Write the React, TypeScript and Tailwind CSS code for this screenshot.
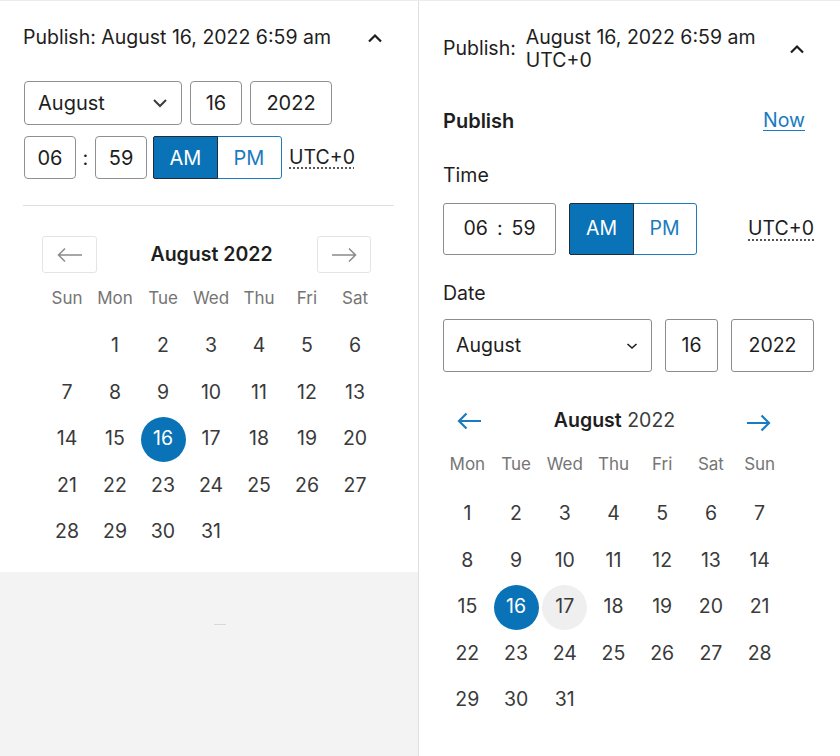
import React from 'react';

const BLUE = 'bg-[#0a73b7]';

function ChevronUp() {
  return (
    <svg width="18" height="12" viewBox="0 0 18 12" fill="none">
      <path d="M3 9.5 9 3.5l6 6" stroke="#1e1e1e" strokeWidth="2.2" />
    </svg>
  );
}

function ChevronDown({ small }: { small?: boolean }) {
  return small ? (
    <svg width="14" height="10" viewBox="0 0 14 10" fill="none">
      <path d="M2.5 3 7 7l4.5-4" stroke="#1e1e1e" strokeWidth="1.6" />
    </svg>
  ) : (
    <svg width="16" height="12" viewBox="0 0 16 12" fill="none">
      <path d="M2 3l6 6 6-6" stroke="#3c3c3c" strokeWidth="2" />
    </svg>
  );
}

function ThinArrow({ dir }: { dir: 'left' | 'right' }) {
  return (
    <svg width="28" height="16" viewBox="0 0 28 16" fill="none">
      {dir === 'left' ? (
        <path d="M26 8H2.5M9 1.5 2.5 8 9 14.5" stroke="#8a8a8a" strokeWidth="1.5" />
      ) : (
        <path d="M2 8h23.5M19 1.5 25.5 8 19 14.5" stroke="#8a8a8a" strokeWidth="1.5" />
      )}
    </svg>
  );
}

function BlueArrow({ dir }: { dir: 'left' | 'right' }) {
  return (
    <svg width="28" height="22" viewBox="0 0 28 22" fill="none">
      {dir === 'left' ? (
        <path d="M26 11H4M11.5 3.5 4 11l7.5 7.5" stroke="#1a7bc0" strokeWidth="2.2" />
      ) : (
        <path d="M2 11h22M16.5 3.5 24 11l-7.5 7.5" stroke="#1a7bc0" strokeWidth="2.2" />
      )}
    </svg>
  );
}

const leftDays: (number | null)[] = [null, ...Array.from({ length: 31 }, (_, i) => i + 1)];
const rightDays: number[] = Array.from({ length: 31 }, (_, i) => i + 1);

function DayCell({ day, hover }: { day: number | null; hover?: boolean }) {
  if (day === null) return <div className="h-[46.5px]" />;
  return (
    <div className="h-[46.5px] flex items-center justify-center">
      <div
        className={
          day === 16
            ? `w-[45px] h-[45px] rounded-full ${BLUE} text-white flex items-center justify-center`
            : hover
              ? 'w-[45px] h-[45px] rounded-full bg-[#efefef] flex items-center justify-center'
              : 'flex items-center justify-center'
        }
      >
        {day}
      </div>
    </div>
  );
}

function LeftPanel() {
  return (
    <div className="w-[419px] border-r border-[#e0e0e0] flex flex-col shrink-0">
      <div className="h-[571px] bg-white">
        <div className="h-[74px] pl-[23px] pr-[34px] flex items-center justify-between text-[19.5px] text-[#1e1e1e]">
          <span>Publish: August 16, 2022 6:59 am</span>
          <ChevronUp />
        </div>

        <div className="mt-[6px] pl-[24px] flex gap-[8px] h-[44px] text-[20px] text-[#1e1e1e]">
          <div className="w-[158px] border border-[#909090] rounded-[4px] flex items-center justify-between pl-[13px] pr-[13px]">
            <span>August</span>
            <ChevronDown />
          </div>
          <div className="w-[52px] border border-[#909090] rounded-[4px] flex items-center justify-center">16</div>
          <div className="w-[82px] border border-[#909090] rounded-[4px] flex items-center justify-center">2022</div>
        </div>

        <div className="mt-[11px] pl-[24px] flex items-center h-[43px] text-[20px] text-[#1e1e1e]">
          <div className="w-[52px] h-full border border-[#909090] rounded-[4px] flex items-center justify-center">06</div>
          <div className="w-[19px] text-center">:</div>
          <div className="w-[52px] h-full border border-[#909090] rounded-[4px] flex items-center justify-center">59</div>
          <div className="ml-[6px] h-full flex border border-[#1a7bc0] rounded-[3px]">
            <div className={`w-[65px] ${BLUE} text-white border border-[#1f2d3a] rounded-l-[2px] flex items-center justify-center -m-px`}>
              AM
            </div>
            <div className="w-[64px] text-[#1a7bc0] flex items-center justify-center">PM</div>
          </div>
          <span className="ml-[7px] text-[19.5px] underline decoration-dotted decoration-[#555] underline-offset-[4px]">UTC+0</span>
        </div>

        <div className="mt-[26px] ml-[23px] mr-[24px] h-px bg-[#e0e0e0]" />

        <div className="mt-[30px] ml-[42px] w-[329px] h-[37px] flex items-center">
          <div className="w-[55px] h-full border border-[#e4e4e4] rounded-[3px] flex items-center justify-center">
            <ThinArrow dir="left" />
          </div>
          <div className="flex-1 text-center pl-[9px] text-[19.5px] font-semibold text-[#1e1e1e]">August 2022</div>
          <div className="w-[54px] h-full border border-[#e4e4e4] rounded-[3px] flex items-center justify-center">
            <ThinArrow dir="right" />
          </div>
        </div>

        <div className="mt-[13px] ml-[43px] w-[336px] grid grid-cols-7 h-[24px] text-[17px] text-[#757575]">
          {['Sun', 'Mon', 'Tue', 'Wed', 'Thu', 'Fri', 'Sat'].map((d) => (
            <div key={d} className="flex items-center justify-center">{d}</div>
          ))}
        </div>

        <div className="mt-[12.75px] ml-[43px] w-[336px] grid grid-cols-7 text-[19.5px] text-[#3a3a3a]">
          {leftDays.map((d, i) => (
            <DayCell key={i} day={d} />
          ))}
        </div>
      </div>
      <div className="flex-1 bg-[#f3f3f3] flex justify-center">
        <div className="mt-[52px] ml-[22px] w-[12px] h-px bg-[#d8d8d8]" />
      </div>
    </div>
  );
}

function RightPanel() {
  return (
    <div className="flex-1 bg-white pl-[24px] pr-[26px]">
      <div className="pt-[25px] flex items-center justify-between text-[19.5px] text-[#1e1e1e]">
        <div className="flex items-center gap-[10px]">
          <span>Publish:</span>
          <span className="leading-[23px]">
            August 16, 2022 6:59 am
            <br />
            UTC+0
          </span>
        </div>
        <div className="mr-[8px]">
          <ChevronUp />
        </div>
      </div>

      <div className="mt-[37px] h-[24px] flex items-center justify-between">
        <span className="text-[20px] font-semibold text-[#1e1e1e]">Publish</span>
        <span className="mr-[9px] text-[19.5px] text-[#1a7bc0] underline underline-offset-[3px]">Now</span>
      </div>

      <div className="mt-[31px] h-[24px] flex items-center text-[19.5px] text-[#1e1e1e]">Time</div>

      <div className="mt-[15px] h-[52px] flex items-center text-[19.5px] text-[#1e1e1e]">
        <div className="w-[113px] h-full border border-[#8c8c8c] rounded-[3px] flex items-center justify-center gap-[9px]">
          <span>06</span>
          <span>:</span>
          <span>59</span>
        </div>
        <div className="ml-[13px] h-full flex border border-[#1a7bc0] rounded-[3px]">
          <div className={`w-[65px] ${BLUE} text-white border border-[#1f2d3a] rounded-l-[2px] flex items-center justify-center -m-px`}>
            AM
          </div>
          <div className="w-[63px] text-[#1a7bc0] flex items-center justify-center">PM</div>
        </div>
        <span className="ml-auto underline decoration-dotted decoration-[#555] underline-offset-[4px]">UTC+0</span>
      </div>

      <div className="mt-[27px] h-[24px] flex items-center text-[19.5px] text-[#1e1e1e]">Date</div>

      <div className="mt-[13px] h-[53px] flex gap-[13px] text-[19.5px] text-[#1e1e1e]">
        <div className="w-[209px] border border-[#8c8c8c] rounded-[3px] flex items-center justify-between pl-[12px] pr-[12px]">
          <span>August</span>
          <ChevronDown small />
        </div>
        <div className="w-[53px] border border-[#8c8c8c] rounded-[3px] flex items-center justify-center">16</div>
        <div className="w-[83px] border border-[#8c8c8c] rounded-[3px] flex items-center justify-center">2022</div>
      </div>

      <div className="mt-[29px] w-[341px] h-[40px] flex items-center justify-between">
        <div className="w-[52px] flex justify-center">
          <BlueArrow dir="left" />
        </div>
        <div className="text-[19.5px] text-[#1e1e1e]">
          <span className="font-semibold">August</span> <span className="text-[#3c3c3c]">2022</span>
        </div>
        <div className="w-[50px] flex justify-center pt-[4px]">
          <BlueArrow dir="right" />
        </div>
      </div>

      <div className="mt-[11px] w-[341px] grid grid-cols-7 h-[24px] text-[17px] text-[#757575]">
        {['Mon', 'Tue', 'Wed', 'Thu', 'Fri', 'Sat', 'Sun'].map((d) => (
          <div key={d} className="flex items-center justify-center">{d}</div>
        ))}
      </div>

      <div className="mt-[14.75px] w-[341px] grid grid-cols-7 text-[19.5px] text-[#3a3a3a]">
        {rightDays.map((d) => (
          <DayCell key={d} day={d} hover={d === 17} />
        ))}
      </div>
    </div>
  );
}

export default function App() {
  return (
    <div className="w-[840px] h-[756px] flex border-t border-[#ececec] bg-white font-['Inter','Liberation_Sans',sans-serif] overflow-hidden">
      <LeftPanel />
      <RightPanel />
    </div>
  );
}
